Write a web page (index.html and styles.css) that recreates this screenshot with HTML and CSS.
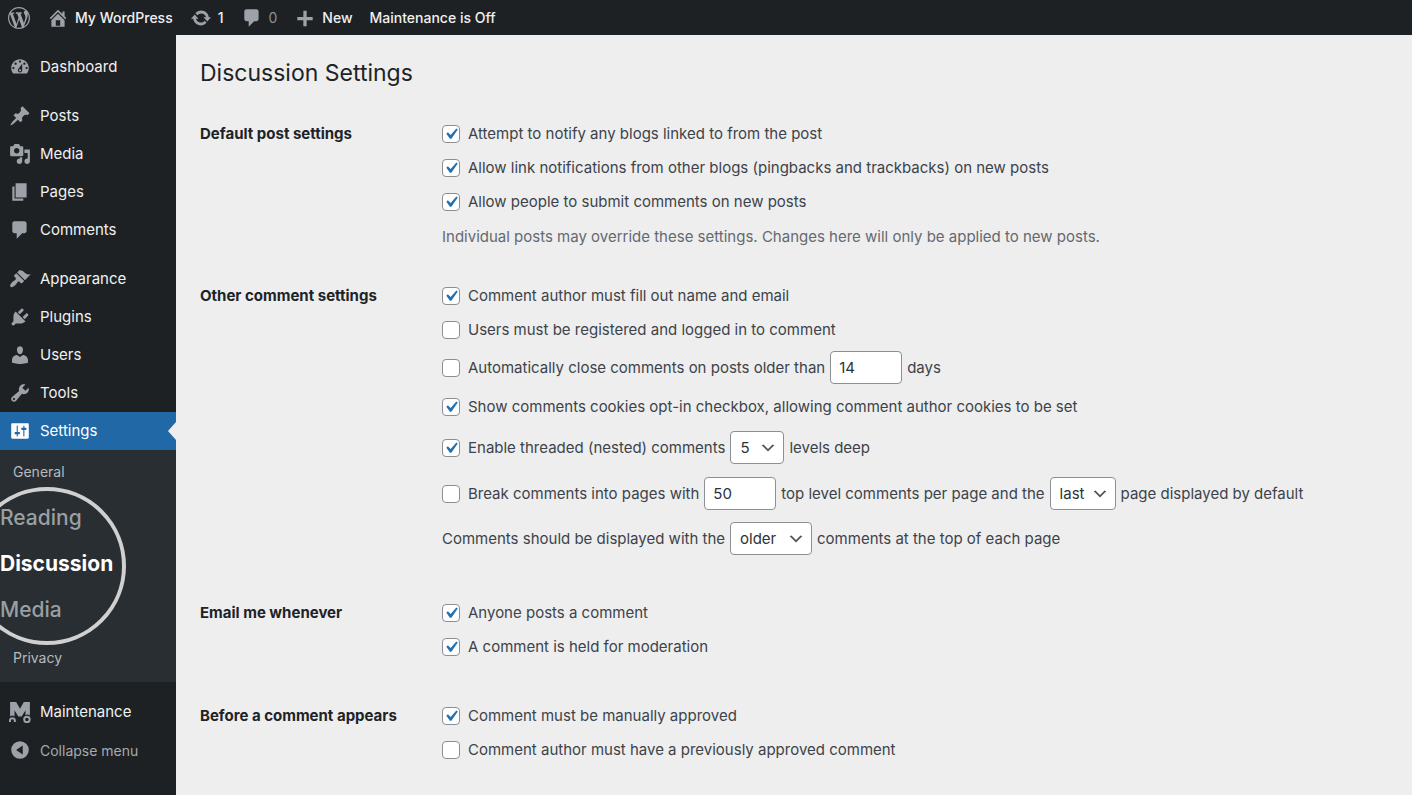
FILE: index.html
```html
<!DOCTYPE html>
<html lang="en">

<head>
  <meta charset="UTF-8" />
  <meta name="viewport" content="width=device-width, initial-scale=1" />
  <title>Discussion Settings</title>

  <link rel="stylesheet" href="styles.css">
</head>

<body>
  <header class="adminbar">
    <a href="#" aria-label="About WordPress">
      <svg class="icon" viewBox="0 0 20 20"><path d="M20 10c0-5.51-4.49-10-10-10C4.48 0 0 4.49 0 10c0 5.52 4.48 10 10 10 5.51 0 10-4.48 10-10zM7.78 15.37L4.37 6.22c.55-.02 1.17-.08 1.17-.08.5-.06.44-1.13-.06-1.11 0 0-1.45.11-2.37.11-.18 0-.37 0-.58-.01C4.12 2.69 6.87 1.11 10 1.11c2.33 0 4.45.87 6.05 2.34-.68-.11-1.65.39-1.65 1.58 0 .74.45 1.36.9 2.1.35.61.55 1.36.55 2.46 0 1.49-1.4 5-1.4 5l-3.03-8.37c.54-.02.82-.17.82-.17.5-.05.44-1.25-.06-1.22 0 0-1.44.12-2.38.12-.87 0-2.33-.12-2.33-.12-.5-.03-.56 1.2-.06 1.22l.92.08 1.26 3.41zM17.41 10c.24-.64.74-1.87.43-4.25.7 1.29 1.05 2.71 1.05 4.25 0 3.29-1.73 6.24-4.4 7.78.97-2.59 1.94-5.2 2.92-7.78zM6.1 18.09C3.12 16.65 1.11 13.53 1.11 10c0-1.3.23-2.48.72-3.59C3.25 10.3 4.67 14.2 6.1 18.09zm4.03-6.63l2.58 6.98c-.86.29-1.76.45-2.71.45-.79 0-1.57-.11-2.29-.33.81-2.38 1.62-4.74 2.42-7.1z"/></svg>
    </a>
    <a href="#">
      <svg class="icon" viewBox="0 0 20 20"><path d="M16 8.5l1.53 1.53-1.06 1.06L10 4.6l-6.47 6.47-1.06-1.06L10 2.47l4 4V4h2v4.5zm-6-2.46l6 5.99V18H4v-5.97zM12 17v-5H8v5h4z"/></svg>
      My WordPress
    </a>
    <a href="#">
      <svg class="icon" viewBox="0 0 20 20"><path d="M10.2 3.28c3.53 0 6.43 2.61 6.92 6h2.08l-3.5 4-3.5-4h2.32c-.45-1.97-2.21-3.45-4.32-3.45-1.45 0-2.73.71-3.54 1.78L4.95 5.66C6.23 4.2 8.11 3.28 10.2 3.28zm-.4 13.44c-3.52 0-6.43-2.61-6.92-6H.8l3.5-4c1.17 1.33 2.33 2.67 3.5 4H5.48c.45 1.97 2.21 3.45 4.32 3.45 1.45 0 2.73-.71 3.54-1.78l1.71 1.95c-1.28 1.46-3.15 2.38-5.25 2.38z"/></svg>
      1
    </a>
    <a href="#" class="empty">
      <svg class="icon" viewBox="0 0 20 20"><path d="M5 2h9c1.1 0 2 .9 2 2v7c0 1.1-.9 2-2 2h-2l-5 5v-5H5c-1.1 0-2-.9-2-2V4c0-1.1.9-2 2-2z"/></svg>
      0
    </a>
    <a href="#">
      <svg class="icon" viewBox="0 0 20 20"><path d="M17 9v3h-5.500v5.500h-3V12H3V9h5.500V3.500h3V9z"/></svg>
      New
    </a>
    <a href="#">Maintenance is Off</a>
  </header>

  <div class="wrap">
    <nav class="sidebar">
      <ul class="menu">
        <li><a href="#"><svg class="icon" viewBox="0 0 20 20"><path d="M3.76 16h12.48c1.1-1.37 1.76-3.11 1.76-5 0-4.42-3.58-8-8-8s-8 3.58-8 8c0 1.89.66 3.63 1.76 5zM10 4c.55 0 1 .45 1 1s-.45 1-1 1-1-.45-1-1 .45-1 1-1zM6 6c.55 0 1 .45 1 1s-.45 1-1 1-1-.45-1-1 .45-1 1-1zm8 0c.55 0 1 .45 1 1s-.45 1-1 1-1-.45-1-1 .45-1 1-1zm-5.37 5.55L12 7v6c0 1.1-.9 2-2 2s-2-.9-2-2c0-.57.24-1.08.63-1.45zM4 10c.55 0 1 .45 1 1s-.45 1-1 1-1-.45-1-1 .45-1 1-1zm12 0c.55 0 1 .45 1 1s-.45 1-1 1-1-.45-1-1 .45-1 1-1zm-5 3c0-.55-.45-1-1-1s-1 .45-1 1 .45 1 1 1 1-.45 1-1z"/></svg>Dashboard</a></li>
        <li class="group"><a href="#"><svg class="icon" viewBox="0 0 20 20"><path d="M10.44 3.02l1.82-1.82 6.36 6.35-1.83 1.82c-1.05-.68-2.48-.57-3.41.36l-.75.75c-.92.93-1.04 2.35-.35 3.41l-1.83 1.82-2.41-2.41-2.8 2.79c-.42.42-3.38 2.71-3.8 2.29s1.86-3.39 2.28-3.81l2.79-2.79L4.1 9.36l1.83-1.82c1.05.69 2.48.57 3.4-.36l.75-.75c.93-.92 1.05-2.35.36-3.41z"/></svg>Posts</a></li>
        <li><a href="#"><svg class="icon" viewBox="0 0 20 20"><path d="M13 11V4c0-.55-.45-1-1-1h-1.670L9 1H5L3.670 3H2c-.55 0-1 .45-1 1v7c0 .55.45 1 1 1h10c.55 0 1-.45 1-1zM7 4.500c1.380 0 2.500 1.120 2.500 2.500S8.380 9.500 7 9.500 4.500 8.380 4.500 7 5.620 4.500 7 4.500zM14 6h5v10.500c0 1.380-1.120 2.500-2.500 2.500S14 17.880 14 16.500s1.120-2.500 2.500-2.500c.17 0 .34.02.5.05V9h-3V6zm-4 8.050V13h2v3.500c0 1.380-1.120 2.500-2.500 2.500S7 17.880 7 16.500 8.120 14 9.500 14c.17 0 .34.02.5.05z"/></svg>Media</a></li>
        <li><a href="#"><svg class="icon" viewBox="0 0 20 20"><path d="M6 15V2h10v13H6zm-1 1h8v2H3V5h2v11z"/></svg>Pages</a></li>
        <li><a href="#"><svg class="icon" viewBox="0 0 20 20"><path d="M5 2h9c1.100 0 2 .9 2 2v7c0 1.100-.9 2-2 2h-2l-5 5v-5H5c-1.100 0-2-.9-2-2V4c0-1.100.9-2 2-2z"/></svg>Comments</a></li>
        <li class="group"><a href="#"><svg class="icon" viewBox="0 0 20 20"><path d="M14.480 11.060L7.410 3.990l1.500-1.500c.5-.56 2.300-.47 3.510.32 1.210.8 1.430 1.280 2.910 2.100 1.180.64 2.450 1.260 4.450.85zm-.71.71L6.700 4.700 4.930 6.470c-.39.39-.39 1.020 0 1.410l1.060 1.060c.39.39.39 1.030 0 1.420-.6.6-1.430 1.110-2.210 1.690-.35.26-.7.53-1.010.84C1.430 14.230.4 16.080 1.400 17.070c.99 1 2.840-.03 4.180-1.360.31-.31.58-.66.85-1.020.57-.78 1.080-1.610 1.690-2.210.39-.39 1.020-.39 1.410 0l1.060 1.060c.39.39 1.020.39 1.410 0z"/></svg>Appearance</a></li>
        <li><a href="#"><svg class="icon" viewBox="0 0 20 20"><path d="M13.110 4.360L9.870 7.600 8 5.730l3.240-3.240c.35-.34 1.050-.2 1.560.32.52.51.66 1.210.31 1.550zm-8 1.770l.91-1.120 9.010 9.010-1.190.84c-.71.71-2.630 1.160-3.820 1.160H6.140L4.900 17.260c-.59.59-1.540.59-2.120 0-.59-.58-.59-1.530 0-2.120l1.240-1.240v-3.880c0-1.130.4-3.190 1.090-3.890zm7.260 3.970l3.240-3.240c.34-.35 1.040-.21 1.550.31.52.51.66 1.210.31 1.550l-3.240 3.250z"/></svg>Plugins</a></li>
        <li><a href="#"><svg class="icon" viewBox="0 0 20 20"><path d="M10 9.250c-2.270 0-2.730-3.440-2.730-3.440C7 4.020 7.820 2 9.970 2c2.160 0 2.980 2.020 2.710 3.810 0 0-.41 3.440-2.680 3.440zm0 2.570L12.720 10c2.390 0 4.520 2.330 4.520 4.530v2.490s-3.650 1.130-7.240 1.130c-3.650 0-7.240-1.130-7.240-1.130v-2.490c0-2.250 1.940-4.480 4.470-4.480z"/></svg>Users</a></li>
        <li><a href="#"><svg class="icon" viewBox="0 0 20 20"><path d="M16.680 9.770c-1.340 1.340-3.300 1.670-4.950.99l-5.410 6.520c-.99.99-2.590.99-3.580 0s-.99-2.590 0-3.570l6.520-5.420c-.68-1.650-.35-3.610.99-4.950 1.280-1.280 3.120-1.620 4.720-1.060l-2.890 2.890 2.820 2.820 2.860-2.870c.53 1.580.18 3.390-1.080 4.650zM3.810 16.210c.4.39 1.040.39 1.430 0 .4-.4.4-1.040 0-1.430-.39-.4-1.030-.4-1.430 0-.39.39-.39 1.030 0 1.430z"/></svg>Tools</a></li>
        <li>
          <a href="#" class="current"><svg class="icon" viewBox="0 0 20 20"><path d="M18 16V4c0-.55-.45-1-1-1H3c-.55 0-1 .45-1 1v12c0 .55.45 1 1 1h14c.55 0 1-.45 1-1zM8 11h1c.55 0 1 .45 1 1s-.45 1-1 1H8v1.500c0 .28-.22.5-.5.5s-.5-.22-.5-.5V13H6c-.55 0-1-.45-1-1s.45-1 1-1h1V5.500c0-.28.22-.5.5-.5s.5.22.5.5V11zm5-2h-1c-.55 0-1-.45-1-1s.45-1 1-1h1V5.500c0-.28.22-.5.5-.5s.5.22.5.5V7h1c.55 0 1 .45 1 1s-.45 1-1 1h-1v5.500c0 .28-.22.5-.5.5s-.5-.22-.5-.5V9z"/></svg>Settings</a>
          <div class="submenu">
            <a href="#">General</a>
            <div class="lens">
              <a href="#">Reading</a>
              <a href="#" class="active">Discussion</a>
              <a href="#">Media</a>
            </div>
            <a href="#">Privacy</a>
          </div>
        </li>
        <li class="group"><a href="#"><svg class="icon" viewBox="0 0 20 20"><path d="M1 1h5.500L10 7l3.500-6H19v12.200a3.300 3.300 0 0 0-4-.2V8.500L11.500 14h-3L5 8.500V14a3 3 0 0 0-4 0z"/><path d="M.8 19v-1.500a2.300 2.300 0 0 1 4.500 0V19M13.800 16.800a2.500 2.500 0 1 0 5 0 2.500 2.500 0 1 0-5 0" fill="none" stroke="currentColor" stroke-width="1.800"/></svg>Maintenance</a></li>
        <li><button type="button" class="collapse"><svg class="icon" viewBox="0 0 20 20"><path fill-rule="evenodd" d="M10 2a8 8 0 1 0 0 16 8 8 0 0 0 0-16zM12.500 6v8L6.500 10z"/></svg>Collapse menu</button></li>
      </ul>
    </nav>

    <main class="content">
      <h1>Discussion Settings</h1>

      <form>
        <section class="setting">
          <h2>Default post settings</h2>
          <div>
            <div class="options">
              <label><input type="checkbox" checked>Attempt to notify any blogs linked to from the post</label>
              <label><input type="checkbox" checked>Allow link notifications from other blogs (pingbacks and trackbacks) on new posts</label>
              <label><input type="checkbox" checked>Allow people to submit comments on new posts</label>
            </div>
            <p class="description">Individual posts may override these settings. Changes here will only be applied to new posts.</p>
          </div>
        </section>

        <section class="setting">
          <h2>Other comment settings</h2>
          <div class="options">
            <label><input type="checkbox" checked>Comment author must fill out name and email</label>
            <label><input type="checkbox">Users must be registered and logged in to comment</label>
            <div class="field-row number-row">
              <label><input type="checkbox">Automatically close comments on posts older than</label>
              <input type="text" id="days_old" value="14">
              <label for="days_old">days</label>
            </div>
            <label><input type="checkbox" checked>Show comments cookies opt-in checkbox, allowing comment author cookies to be set</label>
            <div class="field-row select-row">
              <label><input type="checkbox" checked>Enable threaded (nested) comments</label>
              <select id="depth">
                <option>2</option>
                <option>3</option>
                <option>4</option>
                <option selected>5</option>
                <option>10</option>
              </select>
              <label for="depth">levels deep</label>
            </div>
            <div class="field-row">
              <label><input type="checkbox">Break comments into pages with</label>
              <input type="text" id="per_page" value="50">
              <label for="per_page">top level comments per page and the</label>
              <select id="default_page">
                <option selected>last</option>
                <option>first</option>
              </select>
              <label for="default_page">page displayed by default</label>
            </div>
            <div class="field-row">
              <label for="order">Comments should be displayed with the</label>
              <select id="order">
                <option selected>older</option>
                <option>newer</option>
              </select>
              <span>comments at the top of each page</span>
            </div>
          </div>
        </section>

        <section class="setting">
          <h2>Email me whenever</h2>
          <div class="options">
            <label><input type="checkbox" checked>Anyone posts a comment</label>
            <label><input type="checkbox" checked>A comment is held for moderation</label>
          </div>
        </section>

        <section class="setting">
          <h2>Before a comment appears</h2>
          <div class="options">
            <label><input type="checkbox" checked>Comment must be manually approved</label>
            <label><input type="checkbox">Comment author must have a previously approved comment</label>
          </div>
        </section>
      </form>
    </main>
  </div>
</body>

</html>
```

FILE: styles.css
```css
* {
  box-sizing: border-box;
}

body {
  margin: 0;
  min-height: 100vh;
  display: flex;
  flex-direction: column;
  overflow-x: hidden;
  background: #eeeeee;
  color: #3c434a;
  font-family: Inter, "Liberation Sans", sans-serif;
  font-size: 15px;
  line-height: 22px;
}

a {
  color: inherit;
  text-decoration: none;
}

.icon {
  flex: none;
  width: 22px;
  height: 22px;
  fill: currentColor;
  color: #9ca2a7;
}

/* top bar */
.adminbar {
  display: flex;
  align-items: center;
  gap: 17px;
  height: 35px;
  padding: 0 8px;
  background: #1d2124;
  color: #f0f0f1;
  font-size: 14px;
  font-weight: 500;
}

.adminbar a {
  display: flex;
  align-items: center;
  gap: 6px;
}

.adminbar .empty {
  color: #8c8f94;
  font-weight: 400;
}

/* left menu */
.wrap {
  flex: 1;
  display: flex;
}

.sidebar {
  flex: none;
  width: 176px;
  background: #1d2124;
  color: #f0f0f1;
}

.menu {
  margin: 0;
  padding: 13px 0 0;
  list-style: none;
}

.menu .group {
  margin-top: 11px;
}

.menu li > a,
.collapse {
  position: relative;
  display: flex;
  align-items: center;
  gap: 9px;
  width: 100%;
  height: 38px;
  padding: 0 9px;
  font-size: 15px;
}

.menu .current {
  background: #2168a6;
  color: #fff;
}

.current .icon {
  color: #fff;
}

.current::after {
  content: "";
  position: absolute;
  right: 0;
  top: 10px;
  border: 9px solid transparent;
  border-left: 0;
  border-right: 8px solid #eeeeee;
}

.submenu {
  padding: 10px 0 12px;
  background: #292e32;
  color: #b6babd;
  font-size: 14px;
  overflow: hidden;
}

.submenu > a {
  display: block;
  padding: 0 13px;
  line-height: 24px;
}

.lens {
  display: flex;
  flex-direction: column;
  justify-content: center;
  gap: 22px;
  width: 158px;
  height: 158px;
  margin: 3px 0 1px -32px;
  padding: 0 0 4px 28px;
  border: 4px solid #d0d0d0;
  border-radius: 50%;
  color: #9a9fa3;
  font-size: 21px;
  font-weight: 500;
  line-height: 24px;
}

.lens .active {
  color: #fff;
  font-weight: 700;
}

.collapse {
  border: 0;
  background: none;
  color: #a7aaad;
  font-family: inherit;
  font-size: 14px;
}

/* settings form */
.content {
  flex: 1;
  padding: 22px 24px;
}

h1 {
  margin: 0 0 34px;
  color: #1d2327;
  font-size: 23px;
  font-weight: 400;
  line-height: 32px;
}

.setting {
  display: grid;
  grid-template-columns: 242px 1fr;
  margin-bottom: 37px;
}

.setting h2 {
  margin: 0;
  color: #1d2327;
  font-size: 15px;
  font-weight: 700;
  line-height: 22px;
}

.options {
  display: flex;
  flex-direction: column;
  align-items: flex-start;
  gap: 12px;
  padding-bottom: 10px;
}

.options label {
  display: flex;
  align-items: center;
  gap: 8px;
}

.field-row {
  display: flex;
  align-items: center;
  gap: 5px;
}

.number-row {
  margin-top: -2px;
}

.select-row {
  margin: 1px 0;
}

.description {
  margin: 3px 0 0;
  color: #646970;
}

input[type="checkbox"] {
  appearance: none;
  flex: none;
  width: 18px;
  height: 18px;
  margin: 0;
  border: 1px solid #8c8f94;
  border-radius: 4px;
  background: #fff;
}

input[type="checkbox"]:checked {
  background: #fff url("data:image/svg+xml,%3Csvg xmlns='http://www.w3.org/2000/svg' viewBox='0 0 20 20'%3E%3Cpath d='M14.83 4.89l1.34.94-5.81 8.38H9.02L5.78 9.67l1.34-1.25 2.57 2.4z' fill='%232271b1'/%3E%3C/svg%3E") center / 22px no-repeat;
}

input[type="text"],
select {
  height: 33px;
  border: 1px solid #8c8f94;
  border-radius: 4px;
  background: #fff;
  color: #2c3338;
  font-family: inherit;
  font-size: 15px;
}

input[type="text"] {
  width: 72px;
  padding: 0 8px;
}

select {
  appearance: none;
  padding: 0 27px 0 9px;
  background: #fff url("data:image/svg+xml,%3Csvg xmlns='http://www.w3.org/2000/svg' viewBox='0 0 20 20'%3E%3Cpath d='M5 6l5 5 5-5 2 1-7 7-7-7 2-1z' fill='%23555'/%3E%3C/svg%3E") right 6px center / 18px no-repeat;
}
```
